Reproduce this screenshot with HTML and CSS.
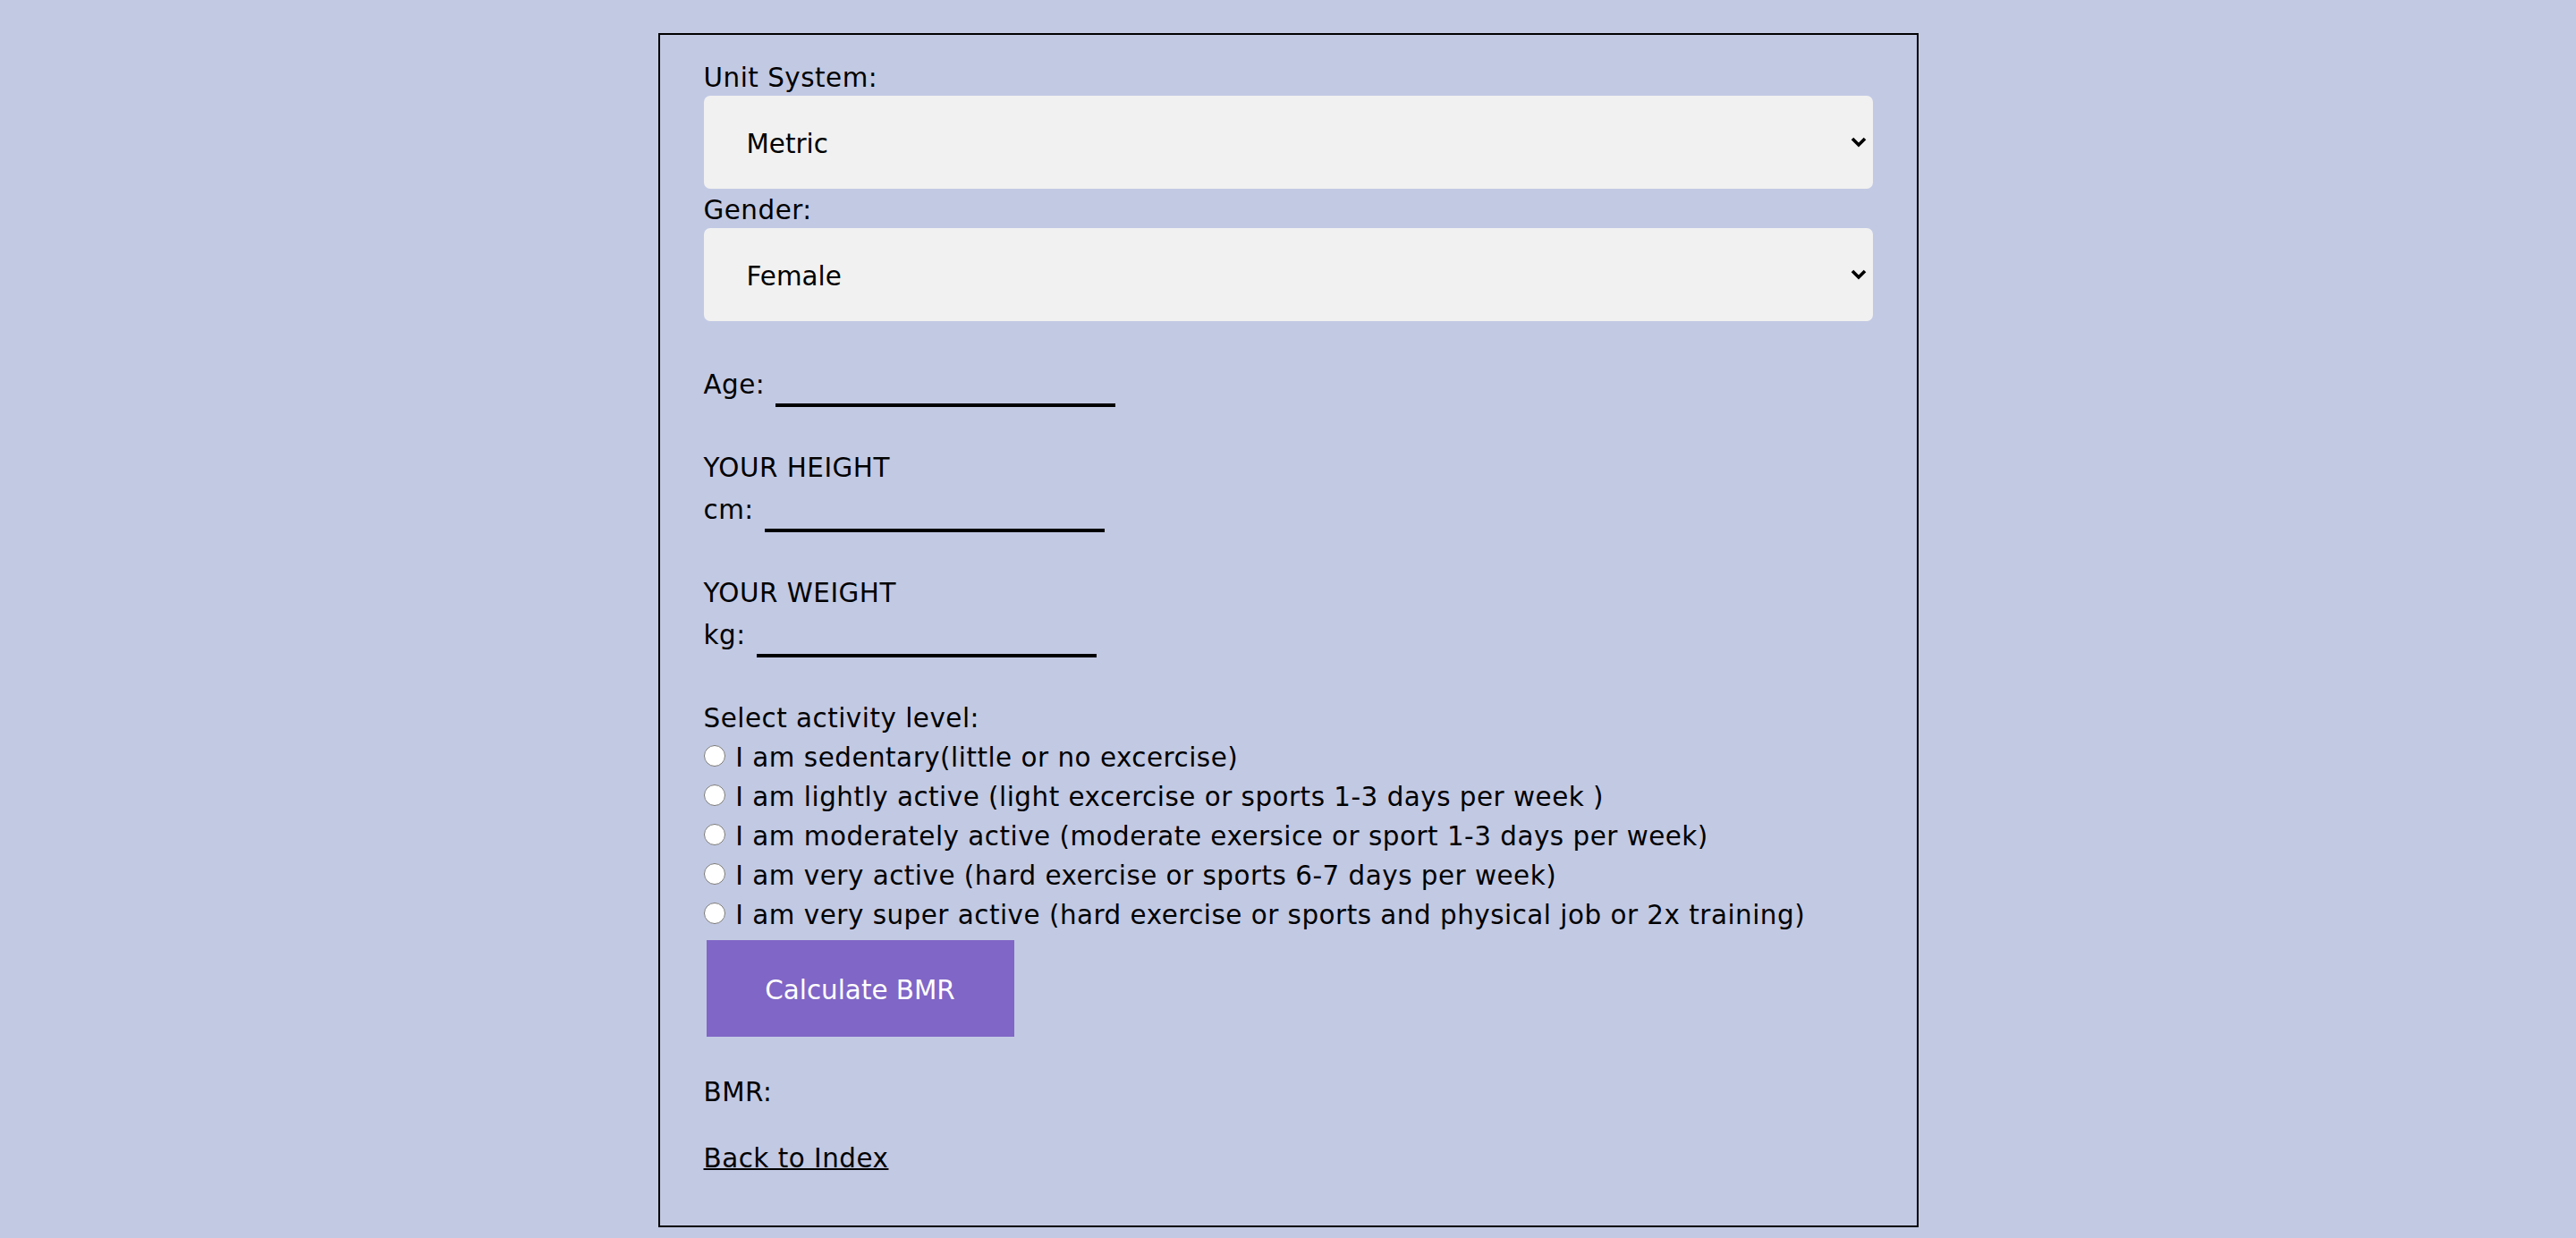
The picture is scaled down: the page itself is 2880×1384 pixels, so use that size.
FILE: index.html
```html
<!DOCTYPE html>
<html lang="en">
<head>
<meta charset="utf-8">
<title>BMR Calculator</title>
<link rel="stylesheet" href="styles.css">
</head>
<body>
<div class="card">
  <form class="bmr-form">
    <label class="label" for="unit">Unit System:</label>
    <div class="select-wrap">
      <select class="select" id="unit">
        <option>Metric</option>
        <option>Imperial</option>
      </select>
      <svg class="chevron" viewBox="0 0 18 12" width="18" height="12" aria-hidden="true"><polyline points="2,2 9,9 16,2" fill="none" stroke="#000" stroke-width="3.6"/></svg>
    </div>
    <label class="label" for="gender">Gender:</label>
    <div class="select-wrap">
      <select class="select" id="gender">
        <option>Female</option>
        <option>Male</option>
      </select>
      <svg class="chevron" viewBox="0 0 18 12" width="18" height="12" aria-hidden="true"><polyline points="2,2 9,9 16,2" fill="none" stroke="#000" stroke-width="3.6"/></svg>
    </div>

    <div class="field-row spaced">
      <span class="field-label">Age:</span>
      <input class="line-input" type="text">
    </div>

    <div class="group spaced">
      <div class="label">YOUR HEIGHT</div>
      <div class="field-row">
        <span class="field-label">cm:</span>
        <input class="line-input" type="text">
      </div>
    </div>

    <div class="group spaced">
      <div class="label">YOUR WEIGHT</div>
      <div class="field-row">
        <span class="field-label">kg:</span>
        <input class="line-input" type="text">
      </div>
    </div>

    <div class="group spaced">
      <div class="label">Select activity level:</div>
      <label class="radio-row"><input class="radio" type="radio" name="act"> I am sedentary(little or no excercise)</label>
      <label class="radio-row"><input class="radio" type="radio" name="act"> I am lightly active (light excercise or sports 1-3 days per week )</label>
      <label class="radio-row"><input class="radio" type="radio" name="act"> I am moderately active (moderate exersice or sport 1-3 days per week)</label>
      <label class="radio-row"><input class="radio" type="radio" name="act"> I am very active (hard exercise or sports 6-7 days per week)</label>
      <label class="radio-row"><input class="radio" type="radio" name="act"> I am very super active (hard exercise or sports and physical job or 2x training)</label>
    </div>

    <button class="calc" type="button">Calculate BMR</button>

    <p class="result">BMR:</p>
    <a class="back" href="#">Back to Index</a>
  </form>
</div>
</body>
</html>
```

FILE: styles.css
```css
html, body {
  margin: 0;
  padding: 0;
}

body {
  background: #c2c9e3;
  color: #000;
  font-family: "DejaVu Sans", Verdana, sans-serif;
  font-size: 29.4px;
  line-height: 44px;
  letter-spacing: 0.5px;
}

.card {
  width: 1307px;
  margin: 37px auto 0;
  border: 2px solid #000;
  padding: 24px 49px 53px;
}

.bmr-form {
  margin: 0;
  display: flex;
  flex-direction: column;
  align-items: flex-start;
}

.label {
  display: block;
  box-sizing: border-box;
  height: 44px;
  padding-top: 1.5px;
}

.select-wrap {
  position: relative;
  width: 100%;
}

.select {
  appearance: none;
  -webkit-appearance: none;
  display: block;
  box-sizing: border-box;
  width: 100%;
  height: 104px;
  margin: 0;
  border: 0;
  border-radius: 7px;
  background: #f1f1f1;
  color: #000;
  font: inherit;
  line-height: normal;
  padding: 3px 48px 0;
}

.chevron {
  position: absolute;
  top: 46px;
  right: 7px;
  pointer-events: none;
}

.spaced {
  margin-top: 44px;
}

.group {
  display: flex;
  flex-direction: column;
  align-items: flex-start;
}

.field-row {
  display: flex;
  align-items: flex-start;
  gap: 12px;
  height: 52px;
}

.field-label {
  margin-top: 4.5px;
}

.line-input {
  box-sizing: border-box;
  width: 380px;
  height: 52px;
  margin: 0;
  padding: 0 4px;
  border: 0;
  border-bottom: 4px solid #000;
  background: transparent;
  font: inherit;
  outline: none;
}

.radio-row {
  display: block;
  box-sizing: border-box;
  height: 44px;
  padding-top: 1.5px;
  white-space: nowrap;
}

.radio {
  width: 24px;
  height: 24px;
  margin: 0 2px 0 0;
  vertical-align: baseline;
}

.calc {
  box-sizing: border-box;
  margin: 8px 0 0 3px;
  width: 344px;
  height: 108px;
  border: 0;
  background: #8066c6;
  color: #fff;
  font: inherit;
  line-height: normal;
  padding: 3px 0 0;
}

.result {
  margin: 39.5px 0 0;
}

.back {
  margin-top: 30px;
  color: #000;
  text-decoration: underline;
  text-decoration-thickness: 2px;
}
```
